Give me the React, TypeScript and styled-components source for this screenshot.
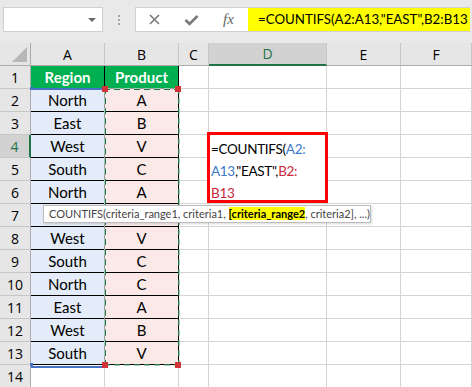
import React from 'react';
import styled, { createGlobalStyle } from 'styled-components';

const GlobalStyle = createGlobalStyle`
  body {
    margin: 0;
    background: #ffffff;
    font-family: 'Lato', 'Liberation Sans', sans-serif;
  }
`;

const COLS = [31, 74, 74, 30, 118, 74, 71];
const ROW_H = 23;

const Page = styled.div`
  width: 472px;
  height: 387px;
  overflow: hidden;
  background: #ffffff;
`;

const FormulaBar = styled.div`
  display: flex;
  align-items: flex-start;
  height: 43px;
  padding: 7px 2px 0 3px;
  box-sizing: border-box;
  background: #e9e9e9;
`;

const NameBox = styled.div`
  position: relative;
  flex: 0 0 100px;
  height: 25px;
  box-sizing: border-box;
  background: #ffffff;
  border: 1px solid #d0d0d0;
`;

const Caret = styled.div`
  position: absolute;
  right: 6px;
  top: 10px;
  border-left: 4px solid transparent;
  border-right: 4px solid transparent;
  border-top: 4px solid #6b6b6b;
`;

const Grip = styled.div`
  flex: 0 0 32px;
  display: flex;
  flex-direction: column;
  gap: 2px;
  align-items: center;
  padding-top: 8px;
  span {
    width: 2px;
    height: 2px;
    background: #a8a8a8;
  }
`;

const FormulaBox = styled.div`
  flex: 1;
  min-width: 0;
  display: flex;
  height: 25px;
  box-sizing: border-box;
  background: #ffffff;
  border: 1px solid #d0d0d0;
  border-right: none;
`;

const ToolButton = styled.div`
  flex: 0 0 37px;
  display: flex;
  align-items: center;
  justify-content: center;
  color: #7a7a7a;
`;

const Fx = styled.span`
  font-family: 'Liberation Serif', serif;
  font-style: italic;
  font-size: 15px;
  color: #666666;
`;

const FormulaInput = styled.div`
  flex: 1;
  min-width: 0;
  margin-left: 1px;
  background: #ffff00;
  padding-left: 10px;
  font-size: 13.3px;
  line-height: 23px;
  color: #000000;
  white-space: nowrap;
  overflow: hidden;
`;

const Sheet = styled.div`
  position: relative;
  display: grid;
  grid-template-columns: ${COLS.map((c) => `${c}px`).join(' ')};
  grid-auto-rows: ${ROW_H}px;
`;

const Corner = styled.div`
  position: relative;
  background: #e6e6e6;
  border-right: 1px solid #ababab;
  border-bottom: 1px solid #ababab;
  box-sizing: border-box;
  &::after {
    content: '';
    position: absolute;
    right: 3px;
    bottom: 3px;
    border-left: 15px solid transparent;
    border-bottom: 15px solid #b8b8b8;
  }
`;

const ColHeader = styled.div<{ $active?: boolean }>`
  display: flex;
  align-items: center;
  justify-content: center;
  box-sizing: border-box;
  background: ${({ $active }) => ($active ? '#d2d2d2' : '#e6e6e6')};
  border-right: 1px solid #c6c6c6;
  border-bottom: ${({ $active }) => ($active ? '2px solid #217346' : '1px solid #ababab')};
  font-family: 'Open Sans', 'Liberation Sans', sans-serif;
  font-size: 14px;
  color: ${({ $active }) => ($active ? '#217346' : '#000000')};
`;

const RowHeader = styled.div<{ $active?: boolean }>`
  display: flex;
  align-items: center;
  justify-content: center;
  box-sizing: border-box;
  background: ${({ $active }) => ($active ? '#d2d2d2' : '#e6e6e6')};
  border-right: ${({ $active }) => ($active ? '2px solid #217346' : '1px solid #ababab')};
  border-bottom: 1px solid #c6c6c6;
  font-family: 'Open Sans', 'Liberation Sans', sans-serif;
  font-size: 14px;
  color: ${({ $active }) => ($active ? '#217346' : '#000000')};
`;

const Cell = styled.div<{ $bg?: string; $head?: boolean; $boxed?: boolean }>`
  display: flex;
  align-items: center;
  justify-content: center;
  box-sizing: border-box;
  background: ${({ $bg }) => $bg || '#ffffff'};
  border-right: 1px solid ${({ $boxed }) => ($boxed ? '#000000' : '#d4d4d4')};
  border-bottom: 1px solid ${({ $boxed }) => ($boxed ? '#000000' : '#d4d4d4')};
  font-size: 15px;
  font-weight: ${({ $head }) => ($head ? 700 : 400)};
  color: ${({ $head }) => ($head ? '#ffffff' : '#000000')};
`;

const RangeA = styled.div`
  position: absolute;
  left: 31px;
  top: 45px;
  width: 73px;
  height: 276px;
  border-top: 2px solid #4472c4;
  border-bottom: 2px solid #4472c4;
`;

const RangeB = styled.div`
  position: absolute;
  left: 104px;
  top: 45px;
  width: 76px;
  height: 278px;
  box-sizing: border-box;
  border: 2px dashed #217346;
  outline: 1px solid rgba(255, 255, 255, 0.6);
  outline-offset: -1px;
`;

const Handle = styled.div<{ $x: number; $y: number; $color: string; $size?: number }>`
  position: absolute;
  left: ${({ $x }) => $x}px;
  top: ${({ $y }) => $y}px;
  width: ${({ $size }) => $size || 6}px;
  height: ${({ $size }) => $size || 6}px;
  background: ${({ $color }) => $color};
`;

const EditBox = styled.div`
  position: absolute;
  left: 207px;
  top: 89px;
  width: 121px;
  height: 71px;
  box-sizing: border-box;
  border: 3px solid #ff0000;
  background: #ffffff;
  padding: 3px 0 0 1px;
  font-size: 13.5px;
  letter-spacing: -0.3px;
  line-height: 22px;
  color: #000000;
  white-space: pre;
`;

const Ref = styled.span<{ $c: 'blue' | 'red' }>`
  color: ${({ $c }) => ($c === 'blue' ? '#3c78c8' : '#c8283c')};
`;

const Tip = styled.div`
  position: absolute;
  left: 43px;
  top: 162px;
  width: 328px;
  height: 18px;
  box-sizing: border-box;
  background: #ffffff;
  border: 1px solid #bcbcbc;
  box-shadow: 1px 1px 2px rgba(0, 0, 0, 0.15);
  padding-left: 5px;
  font-family: 'Lato', 'Liberation Sans', sans-serif;
  font-size: 11px;
  line-height: 16px;
  color: #444444;
  white-space: nowrap;
  overflow: hidden;
  b {
    background: #ffff00;
    color: #000000;
  }
`;

// row 7 is hidden under the tooltip, left blank
const rows: [string, string][] = [
  ['Region', 'Product'],
  ['North', 'A'],
  ['East', 'B'],
  ['West', 'V'],
  ['South', 'C'],
  ['North', 'A'],
  ['', ''],
  ['West', 'V'],
  ['South', 'C'],
  ['North', 'C'],
  ['East', 'A'],
  ['West', 'B'],
  ['South', 'V'],
  ['', ''],
];

const letters = ['A', 'B', 'C', 'D', 'E', 'F'];

export default function App() {
  return (
    <Page>
      <GlobalStyle />
      <FormulaBar>
        <NameBox>
          <Caret />
        </NameBox>
        <Grip>
          <span />
          <span />
          <span />
        </Grip>
        <FormulaBox>
          <ToolButton>
            <svg width="13" height="13" viewBox="0 0 13 13">
              <path d="M2 2 L11 11 M11 2 L2 11" stroke="#7a7a7a" strokeWidth="1.6" />
            </svg>
          </ToolButton>
          <ToolButton>
            <svg width="15" height="12" viewBox="0 0 15 12">
              <path d="M1.5 6 L5.5 10 L13.5 2" stroke="#7a7a7a" strokeWidth="2.6" fill="none" />
            </svg>
          </ToolButton>
          <ToolButton>
            <Fx>fx</Fx>
          </ToolButton>
          <FormulaInput>=COUNTIFS(A2:A13,"EAST",B2:B13</FormulaInput>
        </FormulaBox>
      </FormulaBar>

      <Sheet>
        <Corner />
        {letters.map((l) => (
          <ColHeader key={l} $active={l === 'D'}>
            {l}
          </ColHeader>
        ))}
        {rows.map(([a, b], i) => {
          const inTable = i < 13;
          return (
            <React.Fragment key={i}>
              <RowHeader $active={i === 3}>{i + 1}</RowHeader>
              <Cell
                $bg={i === 0 ? '#00b050' : inTable ? '#e3ecf8' : undefined}
                $head={i === 0}
                $boxed={inTable}
              >
                {a}
              </Cell>
              <Cell
                $bg={i === 0 ? '#00b050' : inTable ? '#fbe9e8' : undefined}
                $head={i === 0}
                $boxed={inTable}
              >
                {b}
              </Cell>
              <Cell />
              <Cell />
              <Cell />
              <Cell />
            </React.Fragment>
          );
        })}

        <RangeA />
        <RangeB />
        <Handle $x={30} $y={44} $color="#4472c4" $size={3} />
        <Handle $x={30} $y={320} $color="#4472c4" $size={3} />
        <Handle $x={102} $y={43} $color="#d13438" />
        <Handle $x={175} $y={43} $color="#d13438" />
        <Handle $x={102} $y={319} $color="#d13438" />
        <Handle $x={175} $y={319} $color="#d13438" />

        <EditBox>
          =COUNTIFS(<Ref $c="blue">A2:</Ref>
          {'\n'}
          <Ref $c="blue">A13</Ref>,"EAST",<Ref $c="red">B2:</Ref>
          {'\n'}
          <Ref $c="red">B13</Ref>
        </EditBox>

        <Tip>
          COUNTIFS(criteria_range1, criteria1, <b>[criteria_range2</b>, criteria2], ...)
        </Tip>
      </Sheet>
    </Page>
  );
}
